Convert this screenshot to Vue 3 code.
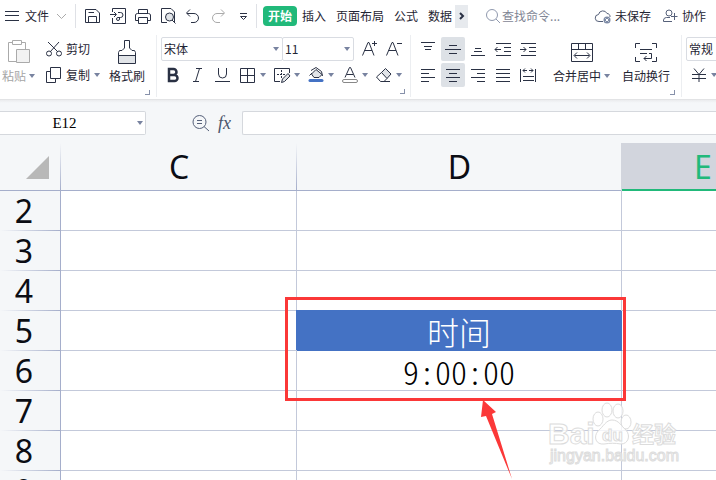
<script setup>
    import { ref } from 'vue'

    const tabs = ['开始', '插入', '页面布局', '公式', '数据']
    const activeTab = ref('开始')

    const cellName = ref('E12')
    const formula = ref('')
    const search = ref('')

    const columns = ['C', 'D', 'E']
    const rows = [2, 3, 4, 5, 6, 7, 8, 9]
    const activeColumn = 'E'

    const cells = {
        D5: '时间',
        D6: '9:00:00'
    }

    // horizontal strokes of the alignment icons: [x1, x2, y]
    const alignButtons = [
        { label: '顶端对齐', lines: [[1, 15, 1.5], [4, 12, 5.5], [5, 11, 8.5]] },
        { label: '垂直居中', active: true, lines: [[4, 12, 4.5], [0, 16, 8.5], [4, 12, 12.5]] },
        { label: '底端对齐', lines: [[5, 11, 7.5], [4, 12, 10.5], [1, 15, 14.5]] },
        { label: '减少缩进量', lines: [[1, 16, 2.5], [9, 16, 6.5], [9, 16, 10.5], [1, 16, 14.5]], path: 'M0 8.5H6M2.5 6L0 8.5L2.5 11' },
        { label: '增加缩进量', lines: [[1, 16, 2.5], [9, 16, 6.5], [9, 16, 10.5], [1, 16, 14.5]], path: 'M0 8.5H6M3.5 6L6 8.5L3.5 11' },
        { label: '左对齐', lines: [[1, 15, 2.5], [1, 9, 6.5], [1, 15, 10.5], [1, 9, 14.5]] },
        { label: '水平居中', active: true, lines: [[1, 15, 2.5], [4, 12, 6.5], [1, 15, 10.5], [4, 12, 14.5]] },
        { label: '右对齐', lines: [[1, 15, 2.5], [7, 15, 6.5], [1, 15, 10.5], [7, 15, 14.5]] },
        { label: '两端对齐', lines: [[1, 15, 2.5], [1, 15, 6.5], [1, 15, 10.5], [1, 15, 14.5]] },
        { label: '分散对齐', lines: [[3, 14, 9.5], [3, 14, 13.5]], path: 'M.5 2V15M15.5 2V15M3 3.5H7M5 1.5L3 3.5L5 5.5M9 3.5H13M11 1.5L13 3.5L11 5.5' }
    ]
</script>

<template>
    <div class="app">
        <header class="topbar">
            <button class="file">
                <svg class="icon" width="14" height="16"><path d="M0 3.500H14M0 7.500H14M0 12.500H14" /></svg>
                <span class="file-label">文件</span>
                <svg class="icon faint" width="9" height="8"><path d="M0 2L4.500 6.500L9 2" /></svg>
            </button>
            <div class="quick">
                <button aria-label="保存"><svg class="icon" width="16" height="16"><path d="M.5 1.500H11L14.500 5V14.500H.5ZM3.500 4.500H9M3.500 14.500V8.500H11.500V14.500" /></svg></button>
                <button aria-label="输出为PDF"><svg class="icon" width="16" height="16"><path d="M2.500 4V.5H15.500V15.500H2.500V10M0 6.500H6M4 4L6.500 6.500L4 9M8 4.500H10.500A2.500 2.500 0 0 1 10.500 9.500H9.500V11A1.500 1.500 0 1 1 8 9.500H10" /></svg></button>
                <button aria-label="打印"><svg class="icon" width="16" height="16"><path d="M3.500 5V1.500H12.500V5M3.500 12.500H.5V7A2 2 0 0 1 2.500 5.500H13.500A2 2 0 0 1 15.500 7V12.500H12.500M3.500 9.500H12.500V15.500H3.500Z" /></svg></button>
                <button aria-label="打印预览"><svg class="icon" width="16" height="16"><path d="M7 14.500H1.500V.5H11L14.500 4V14.500" /><circle class="shade" cx="9.500" cy="9" r="4" /><path d="M12 12L15.500 15.500" /></svg></button>
                <button aria-label="撤销"><svg class="icon" width="16" height="16"><path d="M5 1.500L1.500 5L5 8.500M2 5.500H9A4.500 4.500 0 0 1 9 14.500H6" /></svg></button>
                <button aria-label="恢复"><svg class="icon faint" width="16" height="16"><path d="M11 1.500L14.500 5L11 8.500M14 5.500H7A4.500 4.500 0 0 0 7 14.500H10" /></svg></button>
                <button aria-label="更多"><svg class="icon" width="16" height="16"><path d="M5 5.500H12M5.500 8.500L8.500 11.500L11.500 8.500Z" /></svg></button>
            </div>
            <nav class="tabs">
                <button
                v-for="tab in tabs"
                :key="tab"
                class="tab"
                :class="{ active: tab === activeTab }"
                @click="activeTab = tab"
                >{{tab}}</button>
                <button class="tab-scroll" aria-label="更多选项卡">
                    <svg class="icon bold" width="5" height="8"><path d="M1 1L4 4L1 7" /></svg>
                </button>
            </nav>
            <label class="search">
                <svg class="icon muted" width="16" height="16"><circle cx="7" cy="7" r="5.500" /><path d="M11 11L15 15" /></svg>
                <input v-model="search" type="text" placeholder="查找命令..." aria-label="查找命令">
            </label>
            <button class="status">
                <svg class="icon slate" width="16" height="16"><path d="M8 13.500H4A3.500 3.500 0 0 1 3.500 6.500A4.500 4.500 0 0 1 12 5.500A3 3 0 0 1 15 9" /><circle class="badge" cx="12" cy="12" r="3.500" /><path class="badge-mark" d="M10.500 10.500L13.500 13.500M13.500 10.500L10.500 13.500" /></svg>
                <span>未保存</span>
            </button>
            <button class="status">
                <svg class="icon slate" width="15" height="16"><circle cx="6" cy="5" r="3" /><path d="M9 13.500H.5V12A3 3 0 0 1 3.500 9.500H7M11.500 5V12M8 8.500H14.500" /></svg>
                <span>协作</span>
            </button>
        </header>

        <section class="ribbon">
            <div class="group clipboard">
                <button class="large paste">
                    <svg class="icon faint" width="22" height="23"><path d="M4 2.500H.5V21.500H8M14 2.500H17.500V9M4.500 .5H13.500V4.500H4.500Z" /><path class="sheet-shade" d="M8.500 9.500H21.500V22.500H8.500Z" /></svg>
                    <span class="label">粘贴<i class="caret"></i></span>
                </button>
                <div class="stack">
                    <button class="small">
                        <svg class="icon" width="16" height="16"><path d="M2 1L12 11M13 1L4 11" /><circle cx="3" cy="12.500" r="2.500" /><circle cx="13" cy="12.500" r="2.500" /></svg>
                        剪切
                    </button>
                    <button class="small">
                        <svg class="icon" width="16" height="16"><path d="M4.500 .5H14.500V11.500H4.500ZM4.500 4.500H.5V15.500H9.500V11.500" /></svg>
                        复制<i class="caret"></i>
                    </button>
                </div>
                <button class="large brush">
                    <svg class="icon" width="18" height="23"><path class="shade" d="M.5 15.500H17.500V23.500H.5Z" /><path d="M.5 16V12.500L1.500 10.500H4L6.500 8V.5H11.500V8L14 10.500H16.500L17.500 12.500V16" /></svg>
                    <span class="label">格式刷</span>
                </button>
                <button class="launcher" aria-label="剪贴板设置"></button>
            </div>

            <div class="group font">
                <div class="row">
                    <div class="picker family">
                        <select aria-label="字体"><option>宋体</option></select>
                        <i class="caret"></i>
                    </div>
                    <div class="picker size">
                        <select aria-label="字号"><option>11</option></select>
                        <i class="caret"></i>
                    </div>
                    <div class="resize">
                        <button aria-label="增大字号"><svg class="icon" width="16" height="16"><path d="M.5 14.500L6 1.500H7L12 14.500M2.500 9.500H10M10 2.500H15M12.500 0V5" /></svg></button>
                        <button aria-label="减小字号"><svg class="icon" width="16" height="16"><path d="M.5 14.500L6 1.500H7L12 14.500M2.500 9.500H10M11 2.500H16" /></svg></button>
                    </div>
                </div>
                <div class="row formats">
                    <button aria-label="加粗"><svg class="icon heavy" width="16" height="16"><path d="M4 2H8.500A3 3 0 0 1 8.500 8H4ZM4 8H9.500A3 3 0 0 1 9.500 14H4Z" /></svg></button>
                    <button aria-label="倾斜"><svg class="icon" width="16" height="16"><path d="M6 1.500H12M3 14.500H9M9.500 1.500L5.500 14.500" /></svg></button>
                    <button aria-label="下划线"><svg class="icon" width="16" height="16"><path d="M3.500 1V7A4 4 0 0 0 11.500 7V1M0 14.500H15" /></svg></button>
                    <div class="splits">
                        <button class="split" aria-label="边框"><svg class="icon" width="16" height="16"><path d="M.5 1.500H14.500V15.500H.5ZM7.500 1.500V15.500M.5 8.500H14.500" /></svg><i class="caret"></i></button>
                        <button class="split" aria-label="绘图边框"><svg class="icon" width="16" height="16"><path d="M15.500 6V1.500H.5V14.500H6" /><path class="dotted" d="M7.500 3V12M3 7.500H12" /><path class="shade" d="M7.500 15.500L8.500 12L14 6.500L16 9L10.500 14.500Z" /></svg><i class="caret"></i></button>
                        <button class="split" aria-label="填充颜色"><svg class="icon" width="16" height="16"><path class="fill-bar" d="M2 13.500H14" /><path class="shade" d="M3.500 7L8 2.500L14 7.500L11 10.500H6Z" /><path d="M3 3.500L8 .5L13.500 4.500L14.500 9M4 6L1.500 8.500" /></svg><i class="caret"></i></button>
                        <button class="split" aria-label="字体颜色"><svg class="icon" width="16" height="16"><path d="M3 10.500L7.500 .5H8.500L13 10.500M5 7.500H11" /><rect class="outline" x=".5" y="12.500" width="15" height="3" rx="1.500" /></svg><i class="caret"></i></button>
                        <button class="split" aria-label="清除"><svg class="icon" width="16" height="16"><path class="shade" d="M5.500 5.500L9.500 1.500L15 7L11 11.500Z" /><path d="M5.500 5.500L.5 10L4.500 14.500H8L11 11.500M8 14.500H14" /></svg><i class="caret"></i></button>
                    </div>
                </div>
                <button class="launcher" aria-label="字体设置"></button>
            </div>

            <div class="group align">
                <div class="align-grid">
                    <button
                    v-for="button in alignButtons"
                    :key="button.label"
                    :aria-label="button.label"
                    :class="{ active: button.active }"
                    >
                        <svg class="icon" width="16" height="16">
                            <path v-for="(line, i) in button.lines" :key="i" :d="`M${line[0]} ${line[2]}H${line[1]}`" />
                            <path v-if="button.path" :d="button.path" />
                        </svg>
                    </button>
                </div>
                <button class="large merge">
                    <svg class="icon" width="22" height="20"><path d="M.5 .5H21.500V18.500H.5ZM.5 6.500H21.500M7.500 .5V6.500M14.500 .5V6.500M3.500 12.500H18.500M6 9.500L3 12.500L6 15.500M16 9.500L19 12.500L16 15.500" /></svg>
                    <span class="label">合并居中<i class="caret"></i></span>
                </button>
                <button class="large">
                    <svg class="icon" width="22" height="20"><path d="M5 .5H.5V5M17 .5H21.500V5M.5 14V18.500H5M21.500 14V18.500H17M5 6.500H17M5 10.500H12M14 10.500H16.500V15.500H9M11.500 13L9 15.500L11.500 18" /></svg>
                    <span class="label">自动换行</span>
                </button>
                <button class="launcher" aria-label="对齐设置"></button>
            </div>

            <div class="group number">
                <div class="picker">
                    <select aria-label="数字格式"><option>常规</option></select>
                    <i class="caret"></i>
                </div>
                <button class="split" aria-label="货币格式"><svg class="icon" width="16" height="16"><path d="M3 1.500L8 7.500L13 1.500M8 7.500V15M1 7.500H15M1 11.500H15" /></svg><i class="caret"></i></button>
            </div>
        </section>

        <section class="formula-bar">
            <div class="name-box">
                <input v-model="cellName" type="text" aria-label="名称框">
                <i class="caret"></i>
            </div>
            <div class="formula-tools">
                <button aria-label="浏览公式结果"><svg class="icon slate" width="18" height="18"><circle cx="7.500" cy="8" r="6.500" /><path d="M5 6.500H10M5 9.500H10M12 12.500L17 17" /></svg></button>
                <button class="fx">fx</button>
            </div>
            <input v-model="formula" class="formula" type="text" aria-label="编辑栏">
        </section>

        <main class="sheet">
            <table>
                <colgroup>
                    <col class="col-index">
                    <col v-for="column in columns" :key="column" :class="'col-' + column.toLowerCase()">
                </colgroup>
                <thead>
                    <tr>
                        <th class="corner"><svg width="23" height="23"><path d="M23 0V23H0Z" /></svg></th>
                        <th v-for="column in columns" :key="column" :class="{ selected: column === activeColumn }">{{column}}</th>
                    </tr>
                </thead>
                <tbody>
                    <tr v-for="row in rows" :key="row">
                        <th>{{row}}</th>
                        <td v-for="column in columns" :key="column" :class="{ title: column + row === 'D5' }">{{cells[column + row]}}</td>
                    </tr>
                </tbody>
            </table>
            <div class="highlight"></div>
            <svg class="arrow" width="32" height="80"><path d="M3 0L16 12L12 14L32 79L6 16L1 17Z" /></svg>
            <svg class="watermark" width="136" height="68">
                <text class="brand" x="1" y="44">Bai</text>
                <ellipse cx="51" cy="19" rx="5" ry="7" />
                <ellipse cx="60" cy="10" rx="5" ry="7" />
                <ellipse cx="71" cy="11" rx="5" ry="7" />
                <ellipse cx="79" cy="22" rx="5" ry="7" />
                <path d="M65 20C72 20 74 26 79 30C84 36 81 44 74 44C67 43 64 43 57 44C49 45 46 37 51 31C56 27 59 20 65 20Z" />
                <text class="du" x="55" y="41">du</text>
                <text class="suffix" x="85" y="42">经验</text>
                <text class="site" x="3" y="61">jingyan.baidu.com</text>
            </svg>
        </main>
    </div>
</template>

<style>
    body {
        margin: 0;
        overflow: hidden;
    }
</style>

<style scoped>
    * {
        box-sizing: border-box;
    }

    .app {
        height: 100vh;
        display: flex;
        flex-direction: column;
        overflow: hidden;
        background-color: #fff;
        color: #1f2533;
        font-family: "Noto Sans CJK SC", sans-serif;
        font-size: 12px;
        line-height: 16px;
    }

    button,
    input,
    select {
        margin: 0;
        padding: 0;
        border: none;
        background: none;
        color: inherit;
        font: inherit;
        border-radius: 0;
        white-space: nowrap;
        outline: none;
    }

    button {
        display: flex;
        align-items: center;
        justify-content: center;
        flex: none;
    }

    .icon {
        display: block;
        flex: none;
        fill: none;
        stroke: #2a3144;
        stroke-width: 1;
        overflow: visible;
    }

    .icon.faint {
        stroke: #aaa;
    }

    .icon.muted {
        stroke: #9099ae;
    }

    .icon.slate {
        stroke: #56617a;
    }

    .icon.bold {
        stroke-width: 2;
    }

    .icon.heavy {
        stroke-width: 2.5;
    }

    .icon .shade {
        fill: #e1e4e8;
    }

    .icon .sheet-shade {
        fill: #f2f2f2;
    }

    .icon .dotted {
        stroke-dasharray: 2 1;
    }

    .icon .fill-bar {
        stroke: #4472c4;
        stroke-width: 3;
        stroke-linecap: round;
    }

    .icon .outline {
        stroke: #888;
    }

    .icon .badge {
        fill: #7d8aa5;
        stroke: none;
    }

    .icon .badge-mark {
        stroke: #fff;
    }

    .caret {
        flex: none;
        width: 6px;
        height: 4px;
        background-color: #7883a0;
        clip-path: polygon(0 0, 100% 0, 50% 100%);
    }

    /* top bar */
    .topbar {
        flex: none;
        display: flex;
        align-items: center;
        height: 32px;
        padding: 0 10px 0 5px;
    }

    .file-label {
        margin: 0 8px 0 6px;
    }

    .quick {
        display: flex;
        align-items: center;
        gap: 9px;
        height: 24px;
        margin-left: 9px;
        padding: 0 5px 0 9px;
        border-left: 1px solid #dfe1e6;
        border-right: 1px solid #dfe1e6;
    }

    .tabs {
        display: flex;
        align-items: center;
        margin-left: 6px;
    }

    .tab {
        height: 20px;
        padding: 0 5px;
        border-radius: 4px;
    }

    .tab.active {
        background-color: #21b97a;
        color: #fff;
        font-weight: bold;
    }

    .tab-scroll {
        width: 13px;
        height: 23px;
        margin-left: -2px;
        background-color: #e7eaee;
    }

    .search {
        flex: 1;
        min-width: 0;
        display: flex;
        align-items: center;
        gap: 1px;
        margin-left: 17px;
    }

    .search input {
        flex: 1;
        min-width: 0;
    }

    .search input::placeholder {
        color: #7f8695;
    }

    .status {
        gap: 4px;
    }

    .status + .status {
        margin-left: 12px;
    }

    /* ribbon */
    .ribbon {
        flex: none;
        display: flex;
        height: 67px;
        padding: 3px 0 2px;
        overflow: hidden;
    }

    .group {
        flex: none;
        display: flex;
        padding-top: 2px;
        border-right: 1px solid #eceef1;
    }

    .large {
        flex-direction: column;
        justify-content: flex-start;
        height: 50px;
    }

    .large .icon {
        margin: auto auto 2px;
    }

    .label {
        display: flex;
        align-items: center;
        gap: 3px;
        height: 22px;
    }

    .stack {
        display: flex;
        flex-direction: column;
        gap: 2px;
        margin: 0 9px 0 11px;
    }

    .small {
        justify-content: flex-start;
        gap: 4px;
        height: 24px;
    }

    .clipboard {
        padding-left: 2px;
        padding-right: 6px;
    }

    .paste {
        color: #a5a5a5;
    }

    .launcher {
        align-self: flex-end;
        width: 5px;
        height: 5px;
        margin-bottom: 2px;
        border-right: 1px solid #8791aa;
        border-bottom: 1px solid #8791aa;
    }

    .font {
        flex-direction: column;
        gap: 2px;
        padding-left: 4px;
        padding-right: 5px;
    }

    .row {
        display: flex;
        align-items: center;
        height: 24px;
    }

    .picker {
        display: flex;
        align-items: center;
        width: 122px;
        height: 24px;
        border: 1px solid #d9dce2;
        border-radius: 2px;
    }

    .picker select {
        flex: 1;
        min-width: 0;
        height: 22px;
        padding-left: 2px;
        appearance: none;
    }

    .picker .caret {
        margin-right: 3px;
    }

    .size {
        width: 72px;
        margin-left: -1px;
    }

    .resize {
        display: flex;
        gap: 8px;
        margin-left: 8px;
    }

    .formats {
        gap: 9px;
        padding-left: 4px;
        padding-right: 3px;
    }

    .splits {
        display: flex;
        gap: 8px;
    }

    .split {
        gap: 4px;
    }

    .align {
        padding-left: 5px;
        padding-right: 6px;
    }

    .align-grid {
        display: grid;
        grid-template-columns: repeat(5, 24px);
        grid-auto-rows: 24px;
        gap: 2px 1px;
        margin-right: 13px;
    }

    .align-grid .active {
        background-color: #dde1e6;
        border-radius: 2px;
    }

    .merge {
        margin-right: 12px;
    }

    .number {
        flex-direction: column;
        align-items: flex-start;
        gap: 2px;
        padding-left: 4px;
    }

    .number .split {
        height: 24px;
        margin-left: 5px;
    }

    /* formula bar */
    .formula-bar {
        flex: none;
        display: flex;
        align-items: center;
        padding: 11px 0 8px;
        border-top: 1px solid #e2e3e5;
        background: linear-gradient(#ebecee, #f5f7f9 3px);
    }

    .name-box {
        display: flex;
        align-items: center;
        width: 146px;
        height: 24px;
        padding-right: 2px;
        border: 1px solid #d5d8dd;
        border-left: none;
        border-radius: 0 2px 2px 0;
        background-color: #fff;
    }

    .name-box input {
        flex: 1;
        min-width: 0;
        padding-right: 8px;
        color: #000;
        font-family: "Liberation Serif", serif;
        font-size: 15px;
        text-align: center;
    }

    .formula-tools {
        display: flex;
        align-items: center;
        gap: 8px;
        margin: 0 11px 0 46px;
    }

    .fx {
        color: #4b556c;
        font-family: "Liberation Serif", serif;
        font-size: 18px;
        font-style: italic;
    }

    .formula {
        flex: 1;
        min-width: 0;
        height: 24px;
        padding: 0 4px;
        border: 1px solid #d5d8dd;
        border-right: none;
        border-radius: 2px 0 0 2px;
        background-color: #fff;
    }

    /* sheet */
    .sheet {
        position: relative;
        flex: 1;
        min-height: 0;
        overflow: hidden;
    }

    table {
        width: 100%;
        min-width: 784px;
        table-layout: fixed;
        border-collapse: separate;
        border-spacing: 0;
    }

    .col-index {
        width: 61px;
    }

    .col-c {
        width: 236px;
    }

    .col-d {
        width: 325px;
    }

    th,
    td {
        height: 40px;
        padding: 0;
        border-right: 1px solid #c3c9da;
        border-bottom: 1px solid #c3c9da;
        text-align: center;
        line-height: 36px;
    }

    th {
        background-color: #f5f7f9;
        color: #0b0d14;
        font-family: "Noto Sans", sans-serif;
        font-size: 32px;
        font-weight: normal;
    }

    /* header lines fade out towards the outer edge */
    thead th {
        height: 48px;
        border-right: none;
        border-bottom-color: #a5aecb;
        background-image: linear-gradient(#f5f7f9, #a5aecb);
        background-position: right;
        background-size: 1px 100%;
        background-repeat: no-repeat;
    }

    tbody th {
        padding-right: 12px;
        border-right-color: #a5aecb;
        border-bottom: none;
        background-image: linear-gradient(90deg, #f5f7f9, #a5aecb);
        background-position: bottom;
        background-size: 100% 1px;
        background-repeat: no-repeat;
    }

    .corner {
        padding: 2px 12px 0 0;
        text-align: right;
    }

    .corner svg {
        display: block;
        margin-left: auto;
        fill: #b8b8b8;
    }

    thead .selected {
        border-bottom-color: #21b97a;
        background: #d2d5dd;
        box-shadow: -1px 0 0 #d2d5dd, inset 0 -1px 0 #21b97a;
        color: #21b97a;
    }

    td {
        color: #000;
        font-family: "Noto Sans CJK SC", sans-serif;
        font-size: 32px;
        font-weight: 300;
        line-height: 32px;
        font-feature-settings: "hwid";
    }

    .title {
        border-color: #4472c4;
        background-color: #4472c4;
        box-shadow: -1px -1px 0 #4472c4;
        color: #fff;
    }

    /* annotations lying over the cells */
    .highlight {
        position: absolute;
        left: 285px;
        top: 154px;
        width: 341px;
        height: 104px;
        border: 3px solid #fb3838;
    }

    .arrow {
        position: absolute;
        left: 480px;
        top: 257px;
        fill: #fb3838;
    }

    .watermark {
        position: absolute;
        left: 547px;
        top: 257px;
        overflow: visible;
        fill: rgba(255, 255, 255, 0.8);
        stroke: #dcdcdc;
        stroke-width: 1;
        font-family: "Liberation Sans", "Noto Sans CJK SC", sans-serif;
    }

    .brand {
        font-size: 30px;
        font-weight: bold;
    }

    .du {
        font-size: 17px;
        font-weight: bold;
    }

    .suffix {
        font-size: 22px;
        font-weight: bold;
    }

    .site {
        font-size: 16px;
    }
</style>
